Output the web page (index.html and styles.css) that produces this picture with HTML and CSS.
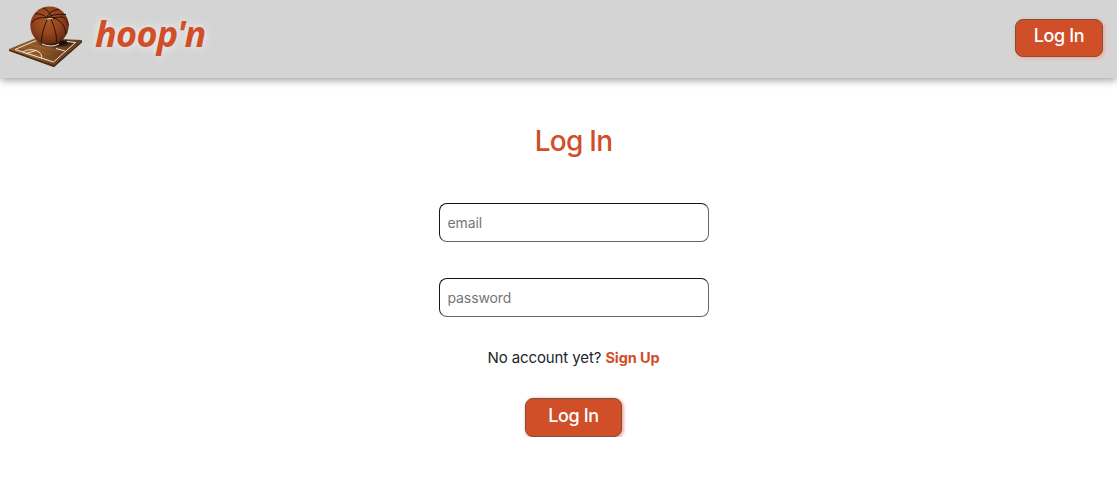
FILE: index.html
```html
<!DOCTYPE html>
<html lang="en">
<head>
<meta charset="utf-8">
<title>hoop'n</title>
<link rel="stylesheet" href="styles.css">
</head>
<body>
<header class="header">
  <div class="brand">
    <svg class="brand-icon" width="90" height="74" viewBox="0 0 90 74" aria-hidden="true">
      <defs>
        <radialGradient id="ball" cx=".45" cy=".38" r=".65">
          <stop offset="0" stop-color="#ac5528"/>
          <stop offset=".5" stop-color="#96451d"/>
          <stop offset=".85" stop-color="#713014"/>
          <stop offset="1" stop-color="#43200f"/>
        </radialGradient>
        <linearGradient id="wood" x1="0" y1="0" x2="1" y2=".3">
          <stop offset="0" stop-color="#8b5224"/>
          <stop offset=".5" stop-color="#98602b"/>
          <stop offset="1" stop-color="#5b3319"/>
        </linearGradient>
        <radialGradient id="shade"><stop offset=".4" stop-color="#160e08"/><stop offset="1" stop-color="#160e08" stop-opacity="0"/></radialGradient>
        <clipPath id="floor"><path d="M9 49 36 38 82 40 54 65Z"/></clipPath>
      </defs>
      <path d="M9 49 54 64.500 82 40V42.500L54 67.200 9 51Z" fill="#4b2b16"/>
      <path d="M9 49 36 38 82 40 54 65Z" fill="url(#wood)"/>
      <g clip-path="url(#floor)" stroke="#5b3217" stroke-width=".5" opacity=".5">
        <path d="M14 47 61 60M20 44 66 56M26 42 71 52M31 40 75 48M36 38 80 44"/>
      </g>
      <ellipse cx="56" cy="43" rx="20" ry="5" fill="url(#shade)" clip-path="url(#floor)"/>
      <path d="M15 49.500 36 40.500M67 41.500 75.500 42.500 53.500 62 15 49.500M42 44Q51 48 59 44M56 48.500 65 51M23 52C27 49 35 49 39 52 41 54 42 55.500 41.500 57.800M26 53.500 36 50.500" fill="none" stroke="#f0e8da" stroke-width="1"/>
      <circle cx="49.500" cy="25.600" r="19.200" fill="url(#ball)"/>
      <path d="M35 14C39 13 44 15 47 18M31.500 23C35 18 41 17 47 18 53 18 58 17 62 17 66 18 68 22 68.500 26M47 18C50 15 57 14 66 14.500M43 8C48 10 51 14 52 18 61 19 65 26 66 34M47.500 19C44 26 42 33 41.500 42M51 19C54 26 57 35 56.500 42M47 17C49 12 54 10 59 9.500" fill="none" stroke="#24130b" stroke-width="1"/>
      <path d="M46.500 19 52.500 18.500" fill="none" stroke="#ffe0c0" stroke-width="1.200"/>
    </svg>
    <span class="brand-name">hoop'n</span>
  </div>
  <button class="button header-button" type="button">Log In</button>
</header>
<main class="main">
  <h1 class="title">Log In</h1>
  <form class="form">
    <input class="field" type="email" placeholder="email" aria-label="email">
    <input class="field" type="password" placeholder="password" aria-label="password">
    <p class="note">No account yet? <a class="link" href="#">Sign Up</a></p>
    <button class="button submit" type="button">Log In</button>
  </form>
</main>
</body>
</html>
```
FILE: styles.css
```css
* { box-sizing: border-box; }
body {
  margin: 0;
  background: #fff;
  color: #212529;
  font-family: Inter, sans-serif;
}
.header {
  display: flex;
  justify-content: space-between;
  align-items: flex-start;
  height: 78px;
  padding-right: 14px;
  background: #d4d4d4;
  box-shadow: 0 2px 8px rgba(0, 0, 0, .4);
}
.brand { display: flex; }
.brand-icon { display: block; }
.brand-name {
  margin: 9px 0 0 5px;
  color: #d04e28;
  font: italic 700 36px/50px "Noto Sans", sans-serif;
  letter-spacing: -.7px;
  text-shadow: 0 0 8px #f4f4f4;
}
.button {
  height: 39px;
  padding: 0 0 4px;
  border: 1px solid #785044;
  border-radius: 8px;
  background: #d04e28;
  box-shadow: 1px 1px 3px 1px #efb09e;
  color: #fff;
  font: 500 18px/22px Inter, sans-serif;
  letter-spacing: -.35px;
}
.header-button { width: 88px; height: 38px; margin-top: 19px; }
.main {
  display: flex;
  flex-direction: column;
  align-items: center;
  padding: 46px 0 0 30px;
}
.title {
  margin: 0;
  color: #d04e28;
  font-size: 28px;
  font-weight: 500;
  line-height: 34px;
  letter-spacing: -.75px;
}
.form {
  display: flex;
  flex-direction: column;
  align-items: center;
  margin-top: 45px;
}
.field {
  width: 270px;
  height: 39px;
  margin-bottom: 36px;
  padding: 0 8px 1px;
  border: 1px solid;
  border-color: #151515 #666 #666 #151515;
  border-radius: 8px;
  background: #fff;
  font: 14px Inter, sans-serif;
  letter-spacing: -.1px;
}
.field::placeholder { color: #757575; }
.note {
  margin: -5px 0 30px;
  font-size: 15px;
  line-height: 20px;
  letter-spacing: -.1px;
}
.link { color: #d04e28; font-weight: 700; font-size: 14.500px; text-decoration: none; }
.submit { width: 97px; }
```
